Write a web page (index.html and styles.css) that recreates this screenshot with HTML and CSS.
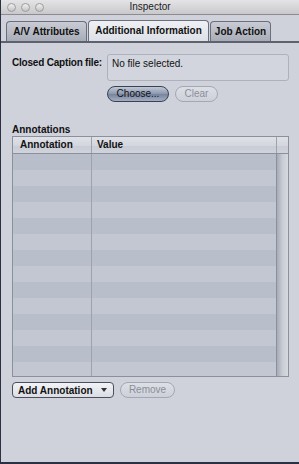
FILE: index.html
```html
<!DOCTYPE html>
<html>
<head>
<meta charset="utf-8">
<link rel="stylesheet" href="styles.css">
</head>
<body>
<div class="window">
  <div class="titlebar">
    <div class="lights"><span class="light"></span><span class="light"></span><span class="light"></span></div>
    <div class="title">Inspector</div>
  </div>
  <div class="tabs">
    <div class="tab t1">A/V Attributes</div>
    <div class="tab t2 active">Additional Information</div>
    <div class="tab t3">Job Action</div>
  </div>
  <div class="content">
    <div class="cc-row">
      <div class="label">Closed Caption file:</div>
      <div class="field">No file selected.</div>
    </div>
    <div class="btn-row">
      <div class="btn primary">Choose...</div>
      <div class="btn disabled clear">Clear</div>
    </div>
    <div class="section-label">Annotations</div>
    <div class="table">
      <div class="thead">
        <div class="c1">Annotation</div>
        <div class="c2">Value</div>
        <div class="c3"></div>
      </div>
      <div class="tbody">
        <div class="rows">
          <div class="row"></div><div class="row"></div><div class="row"></div><div class="row"></div>
          <div class="row"></div><div class="row"></div><div class="row"></div><div class="row"></div>
          <div class="row"></div><div class="row"></div><div class="row"></div><div class="row"></div>
          <div class="row"></div><div class="row"></div>
        </div>
        <div class="scroll"></div>
      </div>
    </div>
    <div class="bottom-row">
      <div class="popup"><span>Add Annotation</span><span class="arrow"></span></div>
      <div class="btn disabled remove">Remove</div>
    </div>
  </div>
</div>
</body>
</html>
```

FILE: styles.css
```css
html, body {
  margin: 0;
  padding: 0;
  width: 299px;
  height: 464px;
  overflow: hidden;
  background: #cfd2db;
}
body {
  font-family: "Liberation Sans", Arial, sans-serif;
  font-size: 10px;
  color: #111;
}
.window {
  width: 299px;
  height: 464px;
  box-sizing: border-box;
  border-left: 1px solid #2b3142;
  border-bottom: 2px solid #2b3142;
  display: flex;
  flex-direction: column;
  background: #cfd2db;
}
.titlebar {
  height: 14px;
  background: linear-gradient(#e4e4e6, #c9c9cc);
  border-bottom: 1px solid #8c8c90;
  display: flex;
  align-items: center;
  position: relative;
}
.lights {
  display: flex;
  gap: 5px;
  padding-left: 6px;
}
.light {
  width: 9px;
  height: 9px;
  border-radius: 50%;
  border: 1px solid #9c9ca0;
  background: linear-gradient(#f0f0f0, #c4c4c6);
  box-sizing: border-box;
}
.title {
  position: absolute;
  left: 0;
  right: 0;
  top: 0;
  text-align: center;
  line-height: 14px;
  font-size: 10px;
  color: #222;
}
.tabs {
  display: flex;
  align-items: flex-end;
  padding: 4px 0 0 5px;
  height: 22px;
  border-bottom: 2px solid #5d626e;
  background: #cfd2db;
}
.tab {
  height: 20px;
  box-sizing: border-box;
  margin-right: 1px;
  border: 1px solid #6a6f7b;
  border-bottom: none;
  border-radius: 4px 4px 0 0;
  background: linear-gradient(#c9ccd4, #a8acb7);
  font-weight: bold;
  font-size: 10px;
  line-height: 20px;
  color: #111;
  white-space: nowrap;
  text-align: center;
}
.t1 { width: 81px; }
.t2 { width: 121px; }
.t3 { width: 61px; }
.tab.active {
  background: linear-gradient(#eef0f4, #dde0e7);
  height: 21px;
}
.content {
  flex: 1;
  padding: 11px 10px 0 11px;
  display: flex;
  flex-direction: column;
}
.cc-row {
  display: flex;
  align-items: flex-start;
}
.label, .section-label {
  font-weight: bold;
  font-size: 10px;
  white-space: nowrap;
}
.label {
  width: 95px;
  padding-top: 3px;
  letter-spacing: -0.2px;
}
.field {
  flex: 1;
  height: 27px;
  box-sizing: border-box;
  border: 1px solid #adb1bb;
  border-radius: 3px;
  padding: 3px 4px;
  background: #d2d5de;
}
.btn-row {
  display: flex;
  gap: 6px;
  padding-left: 95px;
  margin-top: 5px;
}
.btn {
  height: 16px;
  box-sizing: border-box;
  border-radius: 8px;
  line-height: 14px;
  font-size: 10px;
  text-align: center;
  white-space: nowrap;
}
.btn.primary {
  width: 62px;
  border: 1px solid #3a4252;
  background: linear-gradient(#c0c8d8 0%, #8b97ad 50%, #76839b 51%, #a2aec4 100%);
  color: #111;
}
.btn.disabled {
  border: 1px solid #a4a8b2;
  background: linear-gradient(#dcdfe6, #cdd0d9);
  color: #8a8f9a;
}
.clear { width: 43px; }
.section-label {
  margin-top: 22px;
  height: 12px;
}
.table {
  margin-top: 0;
  height: 241px;
  box-sizing: border-box;
  border: 1px solid #8b909b;
  display: flex;
  flex-direction: column;
}
.thead {
  height: 16px;
  flex: none;
  display: flex;
  background: linear-gradient(#dfe1e7, #d3d6de 55%, #c8ccd5 56%, #d0d3db);
  border-bottom: 1px solid #8b909b;
  font-weight: bold;
  font-size: 10px;
  line-height: 16px;
}
.c1 {
  width: 79px;
  padding-left: 7px;
  box-sizing: border-box;
  border-right: 1px solid #9ea2ac;
}
.c2 {
  flex: 1;
  padding-left: 5px;
}
.c3 {
  width: 11px;
  border-left: 1px solid #9ea2ac;
}
.tbody {
  flex: 1;
  display: flex;
  overflow: hidden;
}
.rows {
  flex: 1;
  overflow: hidden;
  position: relative;
}
.row {
  height: 16px;
  background: #b9becb;
}
.row:nth-child(even) {
  background: #c3c7d1;
}
.rows::after {
  content: "";
  position: absolute;
  top: 0;
  bottom: 0;
  left: 78px;
  width: 1px;
  background: #9ea2ac;
}
.scroll {
  width: 11px;
  border-left: 1px solid #8b909b;
  background: linear-gradient(to right, #a6abb6, #c8ccd5 50%, #d6d9e0);
}
.bottom-row {
  display: flex;
  gap: 6px;
  margin-top: 5px;
}
.popup {
  width: 102px;
  height: 16px;
  box-sizing: border-box;
  border: 1px solid #4a4f5a;
  border-radius: 4px;
  background: linear-gradient(#f2f3f6, #dadde4);
  display: flex;
  align-items: center;
  justify-content: space-between;
  padding: 0 6px 0 5px;
  font-weight: bold;
  font-size: 10px;
  white-space: nowrap;
}
.arrow {
  width: 0;
  height: 0;
  border-left: 3px solid transparent;
  border-right: 3px solid transparent;
  border-top: 4px solid #333;
}
.remove {
  width: 55px;
}
```
